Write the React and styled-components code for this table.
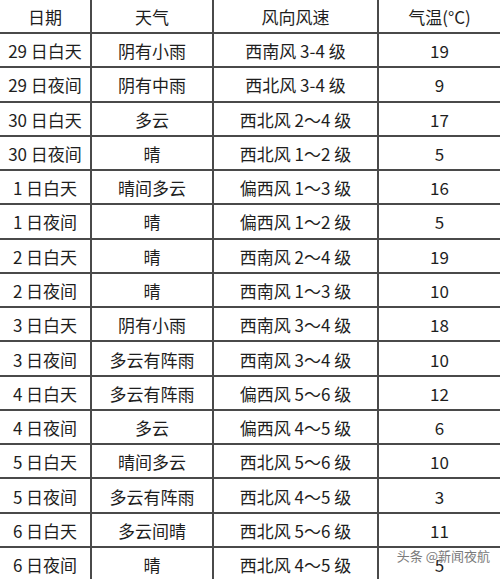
import styled, { createGlobalStyle } from "styled-components";

const GlobalStyle = createGlobalStyle`
    body {
        margin: 0;
        background: #ffffff;
        font-family: "Noto Sans CJK SC", "Noto Sans", sans-serif;
    }
`;

const rows = [
    ["29 日白天", "阴有小雨", "西南风 3-4 级", "19"],
    ["29 日夜间", "阴有中雨", "西北风 3-4 级", "9"],
    ["30 日白天", "多云", "西北风 2～4 级", "17"],
    ["30 日夜间", "晴", "西北风 1～2 级", "5"],
    ["1 日白天", "晴间多云", "偏西风 1～3 级", "16"],
    ["1 日夜间", "晴", "偏西风 1～2 级", "5"],
    ["2 日白天", "晴", "西南风 2～4 级", "19"],
    ["2 日夜间", "晴", "西南风 1～3 级", "10"],
    ["3 日白天", "阴有小雨", "西南风 3～4 级", "18"],
    ["3 日夜间", "多云有阵雨", "西南风 3～4 级", "10"],
    ["4 日白天", "多云有阵雨", "偏西风 5～6 级", "12"],
    ["4 日夜间", "多云", "偏西风 4～5 级", "6"],
    ["5 日白天", "晴间多云", "西北风 5～6 级", "10"],
    ["5 日夜间", "多云有阵雨", "西北风 4～5 级", "3"],
    ["6 日白天", "多云间晴", "西北风 5～6 级", "11"],
    ["6 日夜间", "晴", "西北风 4～5 级", "5"],
];

const headers = ["日期", "天气", "风向风速", "气温(°C)"];

const App = () => {
    return (
        <>
            <GlobalStyle />
            <Wrapper>
                <Row $head>
                    {headers.map((h, i) => (
                        <Cell key={h} $last={i === headers.length - 1}>{h}</Cell>
                    ))}
                </Row>
                {rows.map((r) => (
                    <Row key={r[0]}>
                        {r.map((c, i) => (
                            <Cell key={i} $last={i === r.length - 1}>{c}</Cell>
                        ))}
                    </Row>
                ))}
                <Watermark>头条 @新闻夜航</Watermark>
            </Wrapper>
        </>
    );
};

const Wrapper = styled.div`
    position: relative;
    width: 500px;
    height: 579px;
    overflow: hidden;
    background: #ffffff;
`;

const Row = styled.div`
    display: grid;
    grid-template-columns: 92px 122px 165px 121px;
    height: ${(p) => (p.$head ? "34px" : "34.27px")};
    box-sizing: border-box;
    border-bottom: 2px solid #4a4a4a;
`;

const Cell = styled.div`
    display: flex;
    align-items: center;
    justify-content: center;
    box-sizing: border-box;
    border-right: ${(p) => (p.$last ? "none" : "2px solid #4a4a4a")};
    font-size: 17px;
    color: #1e1e1e;
    white-space: nowrap;
    padding-top: 1px;
`;

const Watermark = styled.div`
    position: absolute;
    right: 10px;
    bottom: 14px;
    font-size: 13px;
    color: #7a7a7a;
    text-shadow: 0 0 2px #ffffff;
`;

export default App;
